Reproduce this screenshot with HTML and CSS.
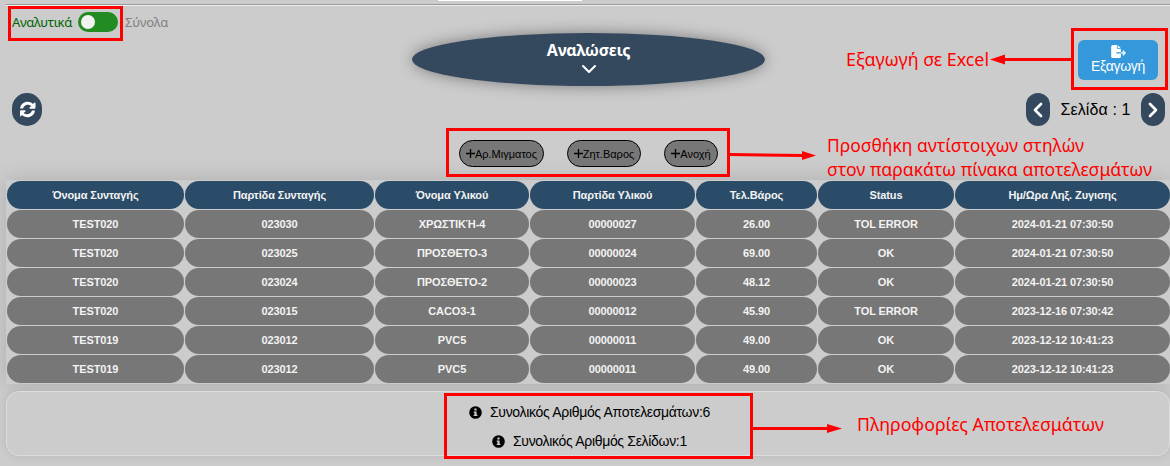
FILE: index.html
```html
<!DOCTYPE html>
<html lang="el">
<head>
<meta charset="utf-8">
<title>Αναλώσεις</title>
<link rel="stylesheet" href="styles.css">
</head>
<body>
<div class="strip"><div class="strip-input"></div></div>
<main class="page">
  <header class="top">
    <div class="left">
      <div class="switch-row"><span class="on" >Αναλυτικά</span><span class="switch"><i class="knob"></i></span><span class="off">Σύνολα</span></div>
      <button class="refresh" aria-label="Ανανέωση"><svg width="17" height="17" viewBox="0 0 512 512"><path fill="#fff" d="M371 161c-59-64-160-62-218 5-13 15-22 32-28 50-3 8-9 12-17 12H51c-12 0-21-10-18-22C56 102 148 24 256 24c64 0 122 26 165 67l35-35c15-15 41-5 41 17v134c0 13-11 24-24 24H339c-21 0-32-26-17-41zM39 281h134c21 0 32 26 17 41l-49 29c59 64 160 62 218-5 13-15 22-32 28-50 3-8 9-12 17-12h57c12 0 21 10 18 22-23 104-115 182-223 182-64 0-122-26-165-67l-35 35c-15 15-24 5-24-17V305c0-13 11-24 25-24z"/></svg></button>
    </div>
    <div class="title"><h1 class="title-text">Αναλώσεις</h1><svg width="16" height="10" viewBox="0 0 16 10"><path d="M2 2l6 6 6-6" fill="none" stroke="#fff" stroke-width="2.1" stroke-linecap="round" stroke-linejoin="round"/></svg></div>
    <div class="right">
      <button class="export"><svg width="15" height="13" viewBox="0 0 576 512"><path fill="#fff" d="M0 64C0 29 29 0 64 0h160v128c0 18 14 32 32 32h128v128H216c-13 0-24 11-24 24s11 24 24 24h168v112c0 35-29 64-64 64H64c-35 0-64-29-64-64zm384 272v-48h110l-39-39c-22-22 12-56 34-34l80 80c9 9 9 25 0 34l-80 80c-22 22-56-12-34-34l39-39zm0-208H256V0z"/></svg><span class="export-text">Εξαγωγή</span></button>
      <div class="pager">
        <button class="pill" aria-label="Προηγούμενη"><svg width="12" height="18" viewBox="0 0 12 18"><path d="M9 3L3 9l6 6" fill="none" stroke="#fff" stroke-width="2.7" stroke-linecap="round" stroke-linejoin="round"/></svg></button>
        <span class="page-label">Σελίδα : 1</span>
        <button class="pill" aria-label="Επόμενη"><svg width="12" height="18" viewBox="0 0 12 18"><path d="M3 3l6 6-6 6" fill="none" stroke="#fff" stroke-width="2.7" stroke-linecap="round" stroke-linejoin="round"/></svg></button>
      </div>
    </div>
  </header>
  <div class="chips">
    <button class="chip chip-a"><svg width="9" height="9" viewBox="0 0 9 9"><path d="M4.5 0v9M0 4.5h9" stroke="#000" stroke-width="1.3"/></svg><span>Αρ.Μιγματος</span></button>
    <button class="chip chip-b"><svg width="9" height="9" viewBox="0 0 9 9"><path d="M4.5 0v9M0 4.5h9" stroke="#000" stroke-width="1.3"/></svg><span>Ζητ.Βαρος</span></button>
    <button class="chip chip-c"><svg width="9" height="9" viewBox="0 0 9 9"><path d="M4.5 0v9M0 4.5h9" stroke="#000" stroke-width="1.3"/></svg><span>Ανοχή</span></button>
  </div>
  <section class="grid">
    <b class="th">Όνομα Συνταγής</b><b class="th">Παρτίδα Συνταγής</b><b class="th">Όνομα Υλικού</b><b class="th">Παρτίδα Υλικού</b><b class="th">Τελ.Βάρος</b><b class="th">Status</b><b class="th">Ημ/Ωρα Ληξ. Ζυγισης</b>
    <b>TEST020</b><b>023030</b><b>ΧΡΩΣΤΙΚΉ-4</b><b>00000027</b><b>26.00</b><b>TOL ERROR</b><b>2024-01-21 07:30:50</b>
    <b>TEST020</b><b>023025</b><b>ΠΡΟΣΘΕΤΟ-3</b><b>00000024</b><b>69.00</b><b>OK</b><b>2024-01-21 07:30:50</b>
    <b>TEST020</b><b>023024</b><b>ΠΡΟΣΘΕΤΟ-2</b><b>00000023</b><b>48.12</b><b>OK</b><b>2024-01-21 07:30:50</b>
    <b>TEST020</b><b>023015</b><b>CACO3-1</b><b>00000012</b><b>45.90</b><b>TOL ERROR</b><b>2023-12-16 07:30:42</b>
    <b>TEST019</b><b>023012</b><b>PVC5</b><b>00000011</b><b>49.00</b><b>OK</b><b>2023-12-12 10:41:23</b>
    <b>TEST019</b><b>023012</b><b>PVC5</b><b>00000011</b><b>49.00</b><b>OK</b><b>2023-12-12 10:41:23</b>
  </section>
  <footer class="summary">
    <div class="info"><svg width="13" height="13" viewBox="0 0 13 13"><circle cx="6.5" cy="6.5" r="6.3"/><path d="M5.4 2.5h2.2v1.9H5.4zM4.7 5.4h2.9v3.3h.8v1.4H4.7V8.700h.8V6.800h-.8z" fill="#ccc"/></svg><span>Συνολικός Αριθμός Αποτελεσμάτων:6</span></div>
    <div class="info"><svg width="13" height="13" viewBox="0 0 13 13"><circle cx="6.5" cy="6.5" r="6.3"/><path d="M5.4 2.5h2.2v1.9H5.4zM4.7 5.4h2.9v3.3h.8v1.4H4.7V8.700h.8V6.800h-.8z" fill="#ccc"/></svg><span>Συνολικός Αριθμός Σελίδων:1</span></div>
  </footer>
</main>
<svg class="notes" width="1170" height="466" viewBox="0 0 1170 466">
  <g fill="none" stroke="#f00" stroke-width="3">
    <rect x="9.500" y="7.500" width="112" height="32"/>
    <rect x="1072.500" y="29.500" width="94" height="59"/>
    <rect x="447.500" y="129.500" width="281" height="46"/>
    <rect x="445.500" y="394.500" width="306" height="63"/>
    <path d="M1071 59.500H1003M730 154.500L804 155.500M752 428.500H829"/>
  </g>
  <path fill="#f00" d="M990 59.500l15-5v10zM816 155.500l-14-4.500v9zM842 428.500l-15-4.500v9z"/>
  <g class="note-text">
    <text x="846" y="66" textLength="143" lengthAdjust="spacingAndGlyphs">Εξαγωγή σε Excel</text>
    <text x="827" y="152" textLength="257" lengthAdjust="spacingAndGlyphs">Προσθήκη αντίστοιχων στηλών</text>
    <text x="827" y="176" textLength="325" lengthAdjust="spacingAndGlyphs">στον παρακάτω πίνακα αποτελεσμάτων</text>
    <text x="857" y="431" textLength="247" lengthAdjust="spacingAndGlyphs">Πληροφορίες Αποτελεσμάτων</text>
  </g>
</svg>
</body>
</html>
```
FILE: styles.css
```css
* { box-sizing: border-box; }
body { margin: 0; width: 1170px; height: 466px; overflow: hidden; background: #ccc; font-family: "Liberation Sans", Arial, sans-serif; color: #000; }
button { border: 0; padding: 0; margin: 0; font: inherit; color: inherit; display: flex; align-items: center; justify-content: center; }
svg { flex: none; display: block; }
.strip { height: 6px; margin-left: 6px; border-bottom: 1px solid #eee; box-shadow: inset 0 -1px #999; }
.strip-input { width: 144px; height: 1px; margin-left: 432px; background: #fff; }
.page { padding-left: 6px; }
.top { height: 120px; display: grid; grid-template-columns: 406px 353px 1fr; }
.left { padding: 6px 0 0 6px; display: flex; flex-direction: column; justify-content: space-between; }
.switch-row { height: 20px; display: flex; align-items: center; font: 13px/20px "Noto Sans", sans-serif; letter-spacing: -.35px; white-space: nowrap; }
.on { width: 66px; color: #006400; }
.off { margin-left: 7px; color: #808080; letter-spacing: -.1px; }
.switch { width: 40px; height: 20px; border-radius: 10px; background: #228b22; padding: 3px; }
.knob { display: block; width: 14px; height: 14px; border-radius: 50%; background: #f2f2f2; }
.refresh { width: 30px; height: 33px; border-radius: 15px; background: #34495e; }
.title { margin-top: 27px; height: 53px; border-radius: 50%; background: #34495e; box-shadow: 0 0 15px rgba(0,0,0,.4); display: flex; flex-direction: column; align-items: center; color: #fff; }
.title-text { margin: 7px 0 4px; font: bold 16px/20px "Noto Sans", sans-serif; letter-spacing: -.3px; }
.right { padding-right: 5px; display: flex; flex-direction: column; align-items: flex-end; justify-content: space-between; }
.export { width: 80px; height: 40px; margin: 34px 7px 0 0; border-radius: 6px; background: #3498db; color: #fff; flex-direction: column; }
.export-text { font-size: 14px; line-height: 17px; letter-spacing: -.3px; }
.pager { display: flex; align-items: center; justify-content: space-between; width: 139px; height: 33px; }
.pill { width: 24px; height: 33px; border-radius: 12px; background: #34495e; }
.page-label { font-size: 16px; white-space: nowrap; letter-spacing: .1px; }
.chips { height: 54px; padding: 14px 0 0 453px; display: flex; gap: 23px; }
.chip { height: 27px; border: 1px solid #000; border-radius: 14px; background: #777; font-size: 11px; white-space: nowrap; }
.chip-a { width: 85px; }
.chip-b { width: 74px; }
.chip-c { width: 54px; }
.grid { height: 204px; padding: 1px 0 1px 1px; display: grid; grid-template-columns: 177px 189px 154px 165px 121px 136px 215px; grid-auto-rows: 28px; gap: 1px; background: #ccc; box-shadow: 0 0 20px rgba(0,0,0,.15); }
.grid b { display: flex; align-items: center; justify-content: center; background: #777; color: #f3f3f3; border-radius: 14px; font-size: 11px; letter-spacing: -.1px; white-space: nowrap; }
.grid .th { background: #2b4c68; }
.summary { position: relative; margin-top: 7px; height: 65px; border: 1px solid #ddd; border-radius: 13px; background: #ccc; box-shadow: 0 0 10px rgba(0,0,0,.1); display: flex; flex-direction: column; gap: 9px; padding-top: 10px; }
.info { height: 20px; display: flex; align-items: center; gap: 8px; margin-left: 462px; font-size: 14px; letter-spacing: -.32px; white-space: nowrap; }
.info + .info { margin-left: 485px; }
.notes { position: absolute; left: 0; top: 0; }
.note-text { fill: #f00; font: 18px "Noto Sans", sans-serif; }
```
